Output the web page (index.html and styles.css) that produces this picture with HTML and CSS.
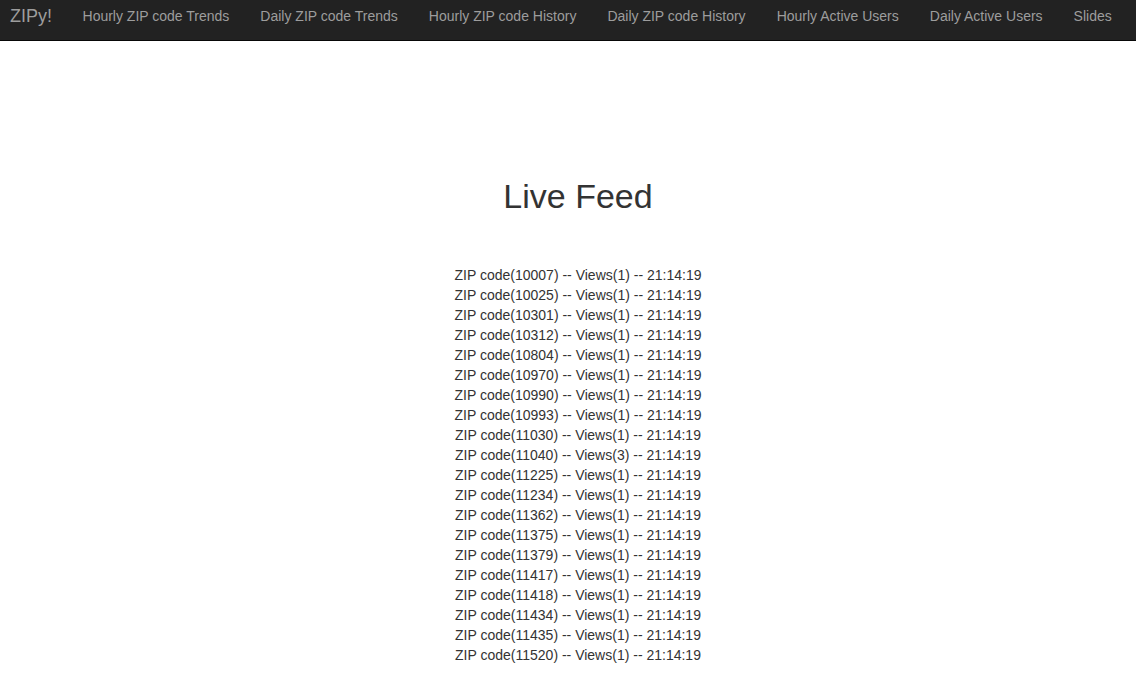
FILE: index.html
```html
<!DOCTYPE html>
<html>
<head>
<meta charset="utf-8">
<title>ZIPy! Live Feed</title>
<link rel="stylesheet" href="styles.css">
</head>
<body>
<nav class="navbar">
  <a class="brand" href="#">ZIPy!</a>
  <ul class="nav">
    <li><a href="#">Hourly ZIP code Trends</a></li>
    <li><a href="#">Daily ZIP code Trends</a></li>
    <li><a href="#">Hourly ZIP code History</a></li>
    <li><a href="#">Daily ZIP code History</a></li>
    <li><a href="#">Hourly Active Users</a></li>
    <li><a href="#">Daily Active Users</a></li>
    <li><a href="#">Slides</a></li>
  </ul>
</nav>
<main class="content">
  <h1 class="title">Live Feed</h1>
  <ul class="feed">
    <li>ZIP code(10007) -- Views(1) -- 21:14:19</li>
    <li>ZIP code(10025) -- Views(1) -- 21:14:19</li>
    <li>ZIP code(10301) -- Views(1) -- 21:14:19</li>
    <li>ZIP code(10312) -- Views(1) -- 21:14:19</li>
    <li>ZIP code(10804) -- Views(1) -- 21:14:19</li>
    <li>ZIP code(10970) -- Views(1) -- 21:14:19</li>
    <li>ZIP code(10990) -- Views(1) -- 21:14:19</li>
    <li>ZIP code(10993) -- Views(1) -- 21:14:19</li>
    <li>ZIP code(11030) -- Views(1) -- 21:14:19</li>
    <li>ZIP code(11040) -- Views(3) -- 21:14:19</li>
    <li>ZIP code(11225) -- Views(1) -- 21:14:19</li>
    <li>ZIP code(11234) -- Views(1) -- 21:14:19</li>
    <li>ZIP code(11362) -- Views(1) -- 21:14:19</li>
    <li>ZIP code(11375) -- Views(1) -- 21:14:19</li>
    <li>ZIP code(11379) -- Views(1) -- 21:14:19</li>
    <li>ZIP code(11417) -- Views(1) -- 21:14:19</li>
    <li>ZIP code(11418) -- Views(1) -- 21:14:19</li>
    <li>ZIP code(11434) -- Views(1) -- 21:14:19</li>
    <li>ZIP code(11435) -- Views(1) -- 21:14:19</li>
    <li>ZIP code(11520) -- Views(1) -- 21:14:19</li>
  </ul>
</main>
</body>
</html>
```
FILE: styles.css
```css
html, body {
  margin: 0;
  padding: 0;
}
body {
  font-family: "Liberation Sans", Arial, sans-serif;
  font-size: 14px;
  line-height: 20px;
  color: #333;
  background: #fff;
}
.navbar {
  display: flex;
  align-items: center;
  height: 40px;
  background: #222;
  border-bottom: 1px solid #080808;
  white-space: nowrap;
  overflow: hidden;
}
.brand {
  flex-shrink: 0;
  padding: 0 15px 0 10px;
  font-size: 18px;
  line-height: 20px;
  color: #9d9d9d;
  text-decoration: none;
  margin-top: -9px;
}
.nav {
  display: flex;
  flex-shrink: 0;
  list-style: none;
  margin: -9px 0 0 0;
  padding: 0;
}
.nav li {
  flex-shrink: 0;
}
.nav a {
  display: block;
  padding: 0 15.5px;
  color: #9d9d9d;
  text-decoration: none;
  font-size: 14px;
  line-height: 20px;
}
.content {
  display: flex;
  flex-direction: column;
  align-items: center;
  padding-top: 135px;
  padding-left: 20px;
}
.title {
  margin: 0;
  font-size: 34px;
  font-weight: 400;
  line-height: 40px;
  color: #333;
}
.feed {
  list-style: none;
  margin: 49px 0 0 0;
  padding: 0;
  text-align: center;
}
.feed li {
  line-height: 20px;
}
```
